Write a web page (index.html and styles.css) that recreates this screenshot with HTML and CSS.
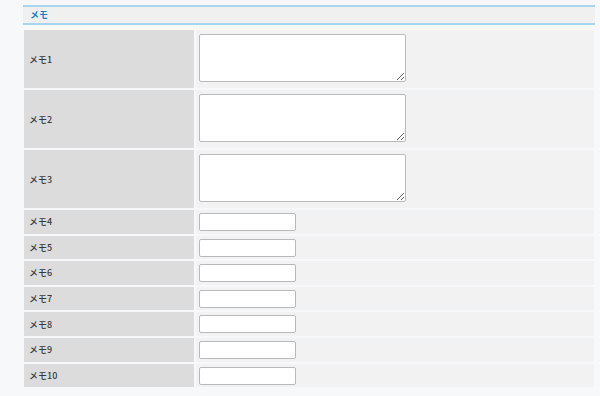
FILE: index.html
```html
<!DOCTYPE html>
<html lang="ja">
<head>
  <meta charset="UTF-8">
  <title>メモ</title>
  <link rel="stylesheet" href="styles.css">
</head>
<body>

  <div class="memo-panel">
    <!-- Section title -->
    <div class="section-title">メモ</div>

    <!-- Memo fields -->
    <div class="memo-form">
      <div class="label">メモ1</div>
      <div class="field"><textarea class="memo-area"></textarea></div>

      <div class="label">メモ2</div>
      <div class="field"><textarea class="memo-area"></textarea></div>

      <div class="label">メモ3</div>
      <div class="field"><textarea class="memo-area"></textarea></div>

      <div class="label small">メモ4</div>
      <div class="field small"><input type="text" class="memo-input"></div>

      <div class="label small">メモ5</div>
      <div class="field small"><input type="text" class="memo-input"></div>

      <div class="label small">メモ6</div>
      <div class="field small"><input type="text" class="memo-input"></div>

      <div class="label small">メモ7</div>
      <div class="field small"><input type="text" class="memo-input"></div>

      <div class="label small">メモ8</div>
      <div class="field small"><input type="text" class="memo-input"></div>

      <div class="label small">メモ9</div>
      <div class="field small"><input type="text" class="memo-input"></div>

      <div class="label small">メモ10</div>
      <div class="field small"><input type="text" class="memo-input"></div>
    </div>
  </div>

</body>
</html>
```

FILE: styles.css
```css
/* General styling */
body {
  margin: 0;
  background-color: #f7f8fa;
  font-family: "Noto Sans CJK JP", "Noto Sans", sans-serif;
  color: #333;
}

.memo-panel {
  padding: 5px 5px 0 23px;
}

/* Section title bar */
.section-title {
  height: 16px;
  line-height: 16px;
  padding-left: 7px;
  background-color: #f0f0f0;
  border-top: 2px solid #a9d5ee;
  border-bottom: 2px solid #a9d5ee;
  color: #1f7fc4;
  font-size: 9px;
  font-weight: bold;
}

/* Form grid */
.memo-form {
  display: grid;
  grid-template-columns: 170px 398px;
  gap: 2px;
  margin: 5px 0 0 1px;
}

.label {
  display: flex;
  align-items: center;
  height: 58px;
  padding-left: 5px;
  background-color: #dcdcdc;
  font-size: 9px;
  font-weight: 500;
  color: #3a3a3a;
}

.field {
  display: flex;
  align-items: flex-start;
  height: 58px;
  padding: 4px 0 0 3px;
  box-sizing: border-box;
  background-color: #f2f2f2;
}

.label.small,
.field.small {
  height: 23.6px;
}

.field.small {
  padding-top: 3px;
}

.memo-area {
  width: 207px;
  height: 48px;
  margin: 0;
  box-sizing: border-box;
  border: 1px solid #b9b9b9;
  border-radius: 2px;
  background: #fff;
}

.memo-input {
  width: 97px;
  height: 18px;
  margin: 0;
  padding: 0 3px;
  box-sizing: border-box;
  border: 1px solid #b9b9b9;
  border-radius: 2px;
  background: #fff;
}
```
